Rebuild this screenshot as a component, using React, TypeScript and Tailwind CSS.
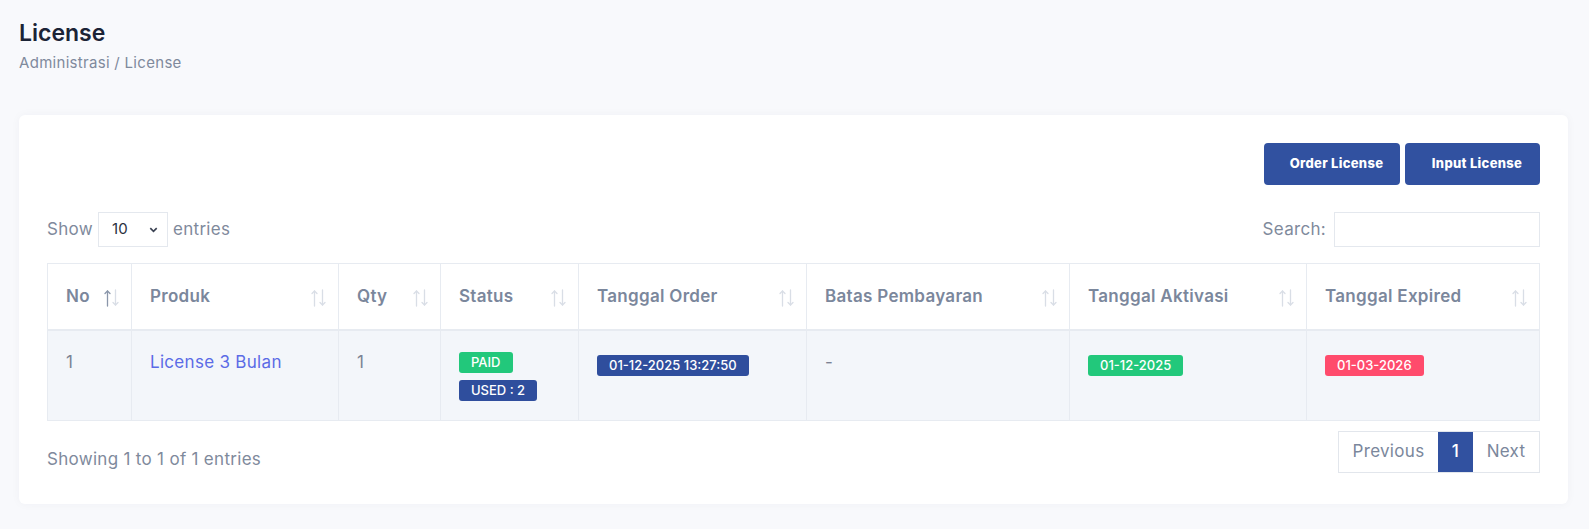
import React from "react";

const font = { fontFamily: "Inter, 'Noto Sans', sans-serif" };

const columns = [
  { label: "No", width: "w-[84px]", active: true },
  { label: "Produk", width: "w-[207px]" },
  { label: "Qty", width: "w-[102px]" },
  { label: "Status", width: "w-[138px]" },
  { label: "Tanggal Order", width: "w-[228px]" },
  { label: "Batas Pembayaran", width: "w-[263px]" },
  { label: "Tanggal Aktivasi", width: "w-[237px]" },
  { label: "Tanggal Expired", width: "w-[233px]" },
];

const Badge = ({ color, children }: { color: string; children: React.ReactNode }) => (
  <span
    className={`inline-flex h-[21px] items-center rounded-[3px] px-[12px] text-[13px] font-medium leading-none tracking-normal text-white ${color}`}
  >
    {children}
  </span>
);

const SortIcon = ({ active }: { active?: boolean }) => (
  <svg width="18" height="18" viewBox="0 0 18 18" fill="none" strokeWidth="1.3" strokeLinecap="round" strokeLinejoin="round">
    <g stroke={active ? "#8a96aa" : "#d9dee6"}>
      <path d="M4.5 17V2" />
      <path d="M2 4.5L4.5 2L7 4.5" />
    </g>
    <g stroke="#d9dee6">
      <path d="M12.5 1V16" />
      <path d="M10 13.5L12.5 16L15 13.5" />
    </g>
  </svg>
);

export default function App() {
  return (
    <div className="min-h-screen bg-[#f8f9fc] pl-[19px] pr-[21px] pt-[18px] tracking-[0.3px]" style={font}>
      <h1 className="text-[23px] font-semibold leading-[30px] tracking-normal text-[#1b2336]">License</h1>
      <p className="mt-[5px] text-[15px] leading-[20px] text-[#7f8a9c]">Administrasi / License</p>

      <div className="mt-[42px] rounded-[6px] bg-white px-[28px] pb-[31px] pt-[28px] shadow-[0_0_10px_rgba(30,40,70,0.04)]">
        <div className="flex justify-end gap-[5px]">
          <button className="h-[42px] w-[136px] rounded-[4px] bg-[#3151a0] pl-[9px] text-[13px] font-extrabold text-white">
            Order License
          </button>
          <button className="h-[42px] w-[135px] rounded-[4px] bg-[#3151a0] pl-[9px] text-[13px] font-extrabold text-white">
            Input License
          </button>
        </div>

        <div className="mt-[27px] flex items-center justify-between text-[17px] text-[#7f8a9c]">
          <div className="flex items-center">
            <span>Show</span>
            <div className="mx-[5px] flex h-[35px] w-[70px] items-center justify-between border border-[#e4e8ee] pl-[13px] pr-[8px] text-[15px] text-[#2b3140]">
              <span>10</span>
              <svg width="11" height="11" viewBox="0 0 24 24" fill="none" stroke="#3a4152" strokeWidth="3.5">
                <path d="M5 9l7 7 7-7" />
              </svg>
            </div>
            <span>entries</span>
          </div>
          <div className="flex items-center">
            <span>Search:</span>
            <div className="ml-[8px] h-[35px] w-[206px] border border-[#e4e8ee]" />
          </div>
        </div>

        <table className="mt-[16px] w-full table-fixed border-collapse border border-[#e7ebf1]">
          <thead>
            <tr className="h-[66px] border-b-2 border-[#e7ebf1] bg-white">
              {columns.map((c) => (
                <th key={c.label} className={`${c.width} border-r border-[#e7ebf1] pl-[18px] pr-[10px] text-left`}>
                  <div className="flex items-center justify-between">
                    <span className="text-[17px] font-semibold text-[#7b879c]">{c.label}</span>
                    <span className="mt-[4px]">
                      <SortIcon active={c.active} />
                    </span>
                  </div>
                </th>
              ))}
            </tr>
          </thead>
          <tbody>
            <tr className="h-[91px] bg-[#f3f6fa] align-top text-[17px] text-[#7b8294]">
              <td className="border-r border-[#e7ebf1] px-[18px] pt-[19px]">1</td>
              <td className="border-r border-[#e7ebf1] px-[18px] pt-[19px] text-[#5b6be6]">License 3 Bulan</td>
              <td className="border-r border-[#e7ebf1] px-[18px] pt-[19px]">1</td>
              <td className="border-r border-[#e7ebf1] px-[18px] pt-[21px]">
                <div className="flex flex-col items-start gap-[7px]">
                  <Badge color="bg-[#22c87b]">PAID</Badge>
                  <Badge color="bg-[#2f4e9d]">USED : 2</Badge>
                </div>
              </td>
              <td className="border-r border-[#e7ebf1] px-[18px] pt-[21px]">
                <Badge color="bg-[#2f4e9d]">01-12-2025 13:27:50</Badge>
              </td>
              <td className="border-r border-[#e7ebf1] px-[18px] pt-[19px]">-</td>
              <td className="border-r border-[#e7ebf1] px-[18px] pt-[21px]">
                <Badge color="bg-[#22c87b]">01-12-2025</Badge>
              </td>
              <td className="px-[18px] pt-[21px]">
                <Badge color="bg-[#ff4b6c]">01-03-2026</Badge>
              </td>
            </tr>
          </tbody>
        </table>

        <div className="mt-[10px] flex items-start justify-between">
          <span className="mt-[16px] text-[17px] text-[#7f8a9c]">Showing 1 to 1 of 1 entries</span>
          <div className="flex h-[42px] border border-[#e2e6ec] text-[17px]">
            <span className="flex w-[99px] items-center justify-center text-[#7b879c]">Previous</span>
            <span className="flex w-[35px] items-center justify-center bg-[#3151a0] font-medium text-white">1</span>
            <span className="flex w-[66px] items-center justify-center text-[#7b879c]">Next</span>
          </div>
        </div>
      </div>
    </div>
  );
}
